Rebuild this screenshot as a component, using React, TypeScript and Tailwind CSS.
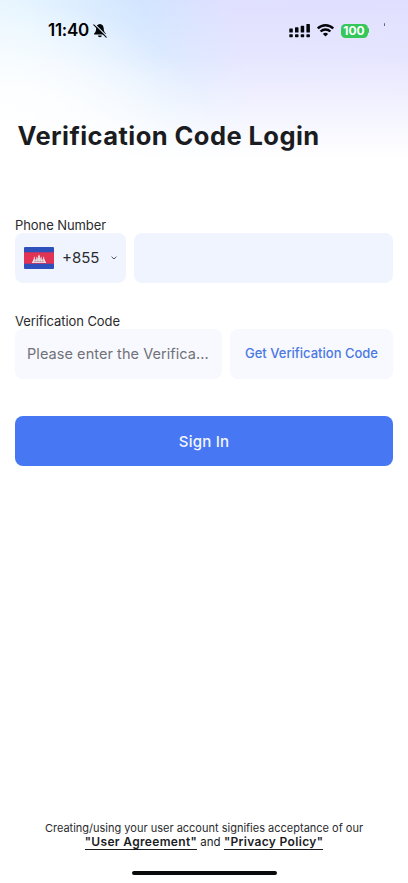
import React from "react";

function BellSlash() {
  return (
    <svg width="15" height="16" viewBox="0 0 15 16" fill="none">
      <path d="M6.9 1C4.5 1.2 3.3 3 3.2 5.2C3.1 8 2.6 9 1.3 10.3C.8 11 1 11.6 1.8 11.6H12c.9 0 1.100-.7.6-1.300C11.300 9 10.800 8 10.700 5.200C10.600 3 9.300 1.200 6.900 1Z" fill="#050609" />
      <path d="M4.900 12.500h4c-.2 1-1 1.700-2 1.700s-1.800-.7-2-1.700Z" fill="#050609" />
      <path d="M1.700 1.200 14 13.500" stroke="#d9ebff" strokeWidth="1.200" />
      <path d="M.8 1.900 13.200 14.200" stroke="#050609" strokeWidth="1.100" strokeLinecap="round" />
    </svg>
  );
}

function Signal() {
  return (
    <svg width="22" height="15" viewBox="0 0 22 15" fill="#050609">
      <rect x="0.300" y="5.500" width="3.500" height="4" rx=".6" />
      <rect x="6" y="4.300" width="3.500" height="5.200" rx=".6" />
      <rect x="11.700" y="2.800" width="3.500" height="6.700" rx=".6" />
      <rect x="17.400" y="1" width="3.500" height="8.500" rx=".6" />
      <rect x="0.300" y="11.200" width="3.500" height="3" rx=".6" />
      <rect x="6" y="11.200" width="3.500" height="3" rx=".6" />
      <rect x="11.700" y="11.200" width="3.500" height="3" rx=".6" />
      <rect x="17.400" y="11.200" width="3.500" height="3" rx=".6" />
    </svg>
  );
}

function Wifi() {
  return (
    <svg width="17" height="13" viewBox="0 0 17 13" fill="none" stroke="#050609" strokeWidth="2.400">
      <path d="M.8 4.500C5 .2 12 .2 16.200 4.500" />
      <path d="M3.600 7.500C6.300 4.800 10.700 4.800 13.400 7.500" />
      <path d="M5.900 9.900C7.400 8.500 9.600 8.500 11.100 9.900L8.500 12.600Z" fill="#050609" stroke="none" />
    </svg>
  );
}

function Flag() {
  return (
    <svg className="block shrink-0" width="30" height="22" viewBox="0 0 30 22">
      <defs>
        <clipPath id="flag">
          <rect width="30" height="22" rx="1" />
        </clipPath>
      </defs>
      <g clipPath="url(#flag)">
        <rect width="30" height="22" fill="#2e50ba" />
        <rect y="5.300" width="30" height="11.400" fill="#e23355" />
        <path d="M8 16v-1.600h1v-2h.8v-2l.5-.9.6.9v2h1.400v-2l.5-1 .6 1v1h.7V9l.9-1.500.9 1.500v2.400h.7v-1l.6-1 .5 1v2h1.400v-2l.6-.9.5.9v2h.8v2h1V16Z" fill="#eadfe4" />
        <path d="M10 14.500h10M11.200 13v2.500M13.700 12.500v3M16.300 12.500v3M18.800 13v2.500" stroke="#b56c7b" strokeWidth=".4" />
      </g>
    </svg>
  );
}

export default function App() {
  return (
    <main className="relative flex h-[883px] w-[408px] flex-col overflow-hidden bg-white font-[Inter,'Liberation_Sans',sans-serif] text-[#1b1c1f]">
      <div className="absolute inset-x-0 top-0 h-[162px] bg-[linear-gradient(to_bottom,#ffffff00,#ffffff33_35%,white_98%),radial-gradient(ellipse_210px_130px_at_0px_130px,#ffffff,#ffffffaa_45%,#ffffff00),linear-gradient(78deg,#eaf7ff_0%,#e6f5ff_12%,#d2e5ff_40%,#e0e0ff_60%,#e0dfff_100%)]" />

      <header className="relative flex h-[61px] items-center pl-12 text-black">
        <span className="text-[17px] font-semibold tracking-[-0.3px]">11:40</span>
        <span className="ml-[4px]"><BellSlash /></span>
        <span className="ml-auto"><Signal /></span>
        <span className="ml-[6px]"><Wifi /></span>
        <span className="ml-[7px] flex h-[14px] w-[27px] items-center justify-center rounded-[4.500px] bg-[#35c759] text-[12px] font-bold text-white">100</span>
        <span className="h-[5px] w-[1.500px] rounded-r bg-[#35c759]" />
        <span className="mr-[23px] mb-[12px] ml-[15px] h-[3px] w-px rounded bg-[#62626e]" />
      </header>

      <h1 className="relative mt-[59px] ml-[17.500px] h-8 text-[25.500px] leading-8 font-bold tracking-[0.44px] whitespace-nowrap">Verification Code Login</h1>

      <form className="relative mx-[15px] mt-[65px] flex flex-col" onSubmit={(e) => e.preventDefault()}>
        <label className="h-4 text-[13px] leading-4 tracking-[-0.080px] text-[#2a2b2e]">Phone Number</label>
        <div className="flex h-[50px] gap-[8px]">
          <button type="button" className="flex w-[111px] items-center rounded-[8px] bg-[#eff4ff] pl-[9px]">
            <Flag />
            <span className="ml-[8px] text-[15px] text-[#2a2b2e]">+855</span>
            <svg className="ml-auto mr-[9px]" width="6" height="4" viewBox="0 0 6 4" fill="none">
              <path d="M.6.700 3 3 5.400.700" stroke="#3d4048" strokeWidth=".9" />
            </svg>
          </button>
          <input aria-label="Phone number" className="min-w-0 flex-1 rounded-[8px] bg-[#eff4ff] px-3 outline-none" />
        </div>

        <label className="mt-[30px] h-4 text-[13px] leading-4 tracking-[-0.080px] text-[#2a2b2e]">Verification Code</label>
        <div className="flex h-[50px] gap-[8px]">
          <div className="flex w-[207px] items-center rounded-[8px] bg-[#f8f9ff] pl-3 text-[14.500px] tracking-[0.060px] whitespace-nowrap text-[#717278]">Please enter the Verifica...</div>
          <button type="button" className="flex-1 rounded-[8px] bg-[#f8f9ff] text-[13px] font-medium whitespace-nowrap text-[#4a78e3]">Get Verification Code</button>
        </div>

        <button type="submit" className="mt-[37px] h-[50px] rounded-[8px] bg-[#4777f3] pt-[2px] text-[15px] font-medium tracking-[0.2px] text-[#f3f6ff]">Sign In</button>
      </form>

      <footer className="relative mt-auto flex flex-col items-center pb-[8px] text-[11px] leading-[14px] whitespace-nowrap">
        <p className="text-[#2a2b2e]">Creating/using your user account signifies acceptance of our</p>
        <p className="text-[12px]">
          <a className="border-b border-[#1b1c1f] font-semibold tracking-[0.33px]">"User Agreement"</a><span className="text-[11.500px]"> and </span><a className="border-b border-[#1b1c1f] font-semibold tracking-[0.33px]">"Privacy Policy"</a>
        </p>
        <div className="mt-[22px] h-[4px] w-[145px] rounded-full bg-[#090a0b]" />
      </footer>
    </main>
  );
}
